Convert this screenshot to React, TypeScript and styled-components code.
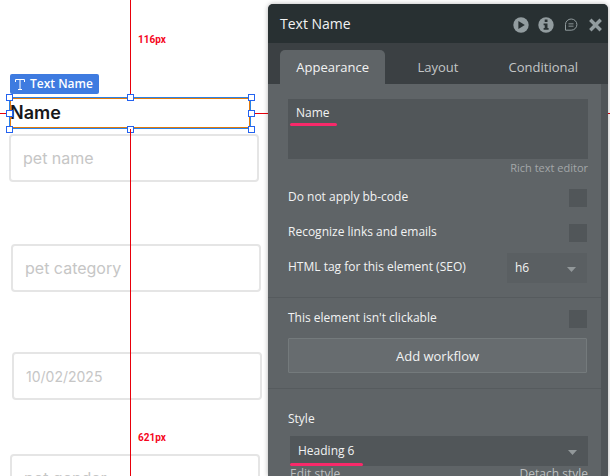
import React from "react";
import styled, { createGlobalStyle } from "styled-components";

const GlobalStyle = createGlobalStyle`
  * { box-sizing: border-box; }
  body { margin: 0; background: #fff; overflow: hidden; }
  button, input, select, textarea { font: inherit; color: inherit; margin: 0; }
`;

const Page = styled.div`
  display: flex;
  height: 100vh;
  padding-right: 2px;
  overflow: hidden;
  background: #fff;
`;

/* ---------- design canvas ---------- */

const Canvas = styled.main`
  position: relative;
  flex: 0 0 268px;
  font-family: Inter, sans-serif;
`;

const Field = styled.input<{ $x: number; $y: number; $size?: number }>`
  position: absolute;
  left: ${(p) => p.$x}px;
  top: ${(p) => p.$y}px;
  width: 250px;
  height: 48px;
  padding: 0 12px;
  border: 2px solid #e5e5e5;
  border-radius: 4px;
  background: #fff;
  font-size: ${(p) => p.$size ?? 16}px;
  outline: none;
  &::placeholder { color: #c6c6c6; opacity: 1; }
`;

const Guide = styled.div<{ $x: number; $y: number; $w?: string; $h?: string }>`
  position: absolute;
  left: ${(p) => p.$x}px;
  top: ${(p) => p.$y}px;
  width: ${(p) => p.$w ?? "1px"};
  height: ${(p) => p.$h ?? "1px"};
  background: #e8000b;
`;

const Distance = styled.span<{ $y: number }>`
  position: absolute;
  left: 138px;
  top: ${(p) => p.$y}px;
  font: 700 10px/14px Roboto, sans-serif;
  color: #f5061d;
`;

const Tag = styled.div`
  position: absolute;
  left: 10px;
  top: 74px;
  display: flex;
  align-items: center;
  gap: 5px;
  height: 20px;
  padding: 0 6px 0 5px;
  border-radius: 2px;
  background: #3e7be0;
  color: #fff;
  font: 600 12px/20px "Open Sans", sans-serif;
  white-space: nowrap;
`;

const Selection = styled.div`
  position: absolute;
  left: 9px;
  top: 97px;
  width: 242px;
  height: 32px;
  padding: 1px;
  box-shadow: inset 0 0 0 1px #2b82e6, inset 0 0 0 2px #df7a0c;
`;

const Heading = styled.h6`
  margin: 0;
  font-size: 18px;
  line-height: 30px;
  font-weight: 600;
  color: #17171a;
`;

const Handle = styled.i<{ $x: number; $y: number }>`
  position: absolute;
  left: ${(p) => p.$x}%;
  top: ${(p) => p.$y}%;
  width: 7px;
  height: 7px;
  margin: -3px;
  border: 1px solid #2463f0;
  background: #fff;
`;

const handles = [
  [0, 0], [50, 0], [100, 0],
  [0, 50], [100, 50],
  [0, 100], [50, 100], [100, 100],
];

/* ---------- property panel ---------- */

const Panel = styled.aside`
  position: relative;
  flex: 1;
  min-width: 0;
  display: flex;
  flex-direction: column;
  margin-top: 4px;
  border-radius: 5px 5px 0 0;
  background: #5f6467;
  box-shadow: 0 0 5px rgba(0, 0, 0, 0.3);
  color: #f2f3f3;
  font: 12px/18px "Open Sans", sans-serif;
`;

const Header = styled.header`
  flex: none;
  display: flex;
  align-items: center;
  height: 39px;
  padding: 0 5px 0 12px;
  border-radius: 5px 5px 0 0;
  background: #283032;
`;

const Title = styled.h1`
  flex: 1;
  margin: 0;
  font-size: 14px;
  font-weight: 400;
`;

const Tools = styled.div`
  display: flex;
  align-items: center;
  gap: 9px;
  padding-top: 2px;
`;

const IconButton = styled.button`
  display: flex;
  padding: 0;
  border: 0;
  background: none;
  color: #929c9f;
`;

const Tabs = styled.nav`
  flex: none;
  display: flex;
  height: 41px;
  padding: 7px 12px 0;
  background: #3b4043;
`;

const Tab = styled.button<{ $active?: boolean }>`
  flex: 1 1 0;
  padding: 0;
  border: 0;
  border-radius: 5px 5px 0 0;
  background: ${(p) => (p.$active ? "#5f6467" : "transparent")};
  color: ${(p) => (p.$active ? "#f2f3f3" : "#c3c6c7")};
  font-size: 13px;
`;

const Scroll = styled.div`
  flex: 1;
  min-height: 0;
  overflow: hidden;
  border-right: 7px solid #505558;
`;

const Section = styled.section<{ $top: number; $bottom?: number }>`
  padding: ${(p) => p.$top}px 13px ${(p) => p.$bottom ?? 15}px 20px;
  & + & { border-top: 1px solid #565b5e; }
`;

const TextBox = styled.textarea`
  display: block;
  width: 100%;
  height: 60px;
  padding: 5px 8px;
  border: 0;
  resize: none;
  outline: none;
  background: #515659;
`;

const Marked = styled.div`
  position: relative;
`;

const Underline = styled.i<{ $x: number; $y: number; $w: number }>`
  position: absolute;
  left: ${(p) => p.$x}px;
  top: ${(p) => p.$y}px;
  width: ${(p) => p.$w}px;
  height: 3px;
  border-radius: 2px;
  background: #f8296a;
`;

const TextLink = styled.a`
  color: inherit;
  text-decoration: none;
`;

const EditorLink = styled.div`
  text-align: right;
  font-size: 11px;
  color: #a3a7a9;
`;

const StyleLinks = styled.div`
  display: flex;
  justify-content: space-between;
  line-height: 16px;
  color: #bcbfc0;
`;

const Rows = styled.div`
  display: flex;
  flex-direction: column;
  gap: 17px;
  padding-top: 12px;
`;

const Row = styled.label`
  display: flex;
  align-items: center;
  justify-content: space-between;
  height: 18px;
  padding-right: 1px;
  white-space: nowrap;
`;

const RowText = styled.span`
  margin-top: -3px;
`;

const Check = styled.input`
  appearance: none;
  width: 18px;
  height: 18px;
  background: #515659;
  &:checked { background: #8d9597; }
`;

const SelectWrap = styled.span<{ $narrow?: boolean }>`
  position: relative;
  display: block;
  width: ${(p) => (p.$narrow ? "80px" : "auto")};
  svg {
    position: absolute;
    right: 11px;
    top: 14px;
    pointer-events: none;
  }
`;

const Select = styled.select<{ $soft?: boolean }>`
  appearance: none;
  display: block;
  width: 100%;
  height: 30px;
  padding: 0 8px;
  border: 0;
  border-radius: 0;
  outline: none;
  background: ${(p) => (p.$soft ? "#5a5f62" : "#515659")};
`;

const WorkflowButton = styled.button`
  display: block;
  width: calc(100% - 1px);
  height: 35px;
  margin-top: 10px;
  padding: 0;
  border: 1px solid #747a7c;
  border-radius: 1px;
  background: #676c6f;
  font-size: 13px;
`;

const StyleLabel = styled.label`
  display: block;
  margin-bottom: 8px;
`;

const StyleBlock = styled.div`
  padding-left: 2px;
`;

const Caret = () => (
  <svg width="9" height="5" viewBox="0 0 9 5" aria-hidden="true">
    <path d="M0 0h9L4.5 5z" fill="#92989a" />
  </svg>
);

export default function App() {
  return (
    <>
      <GlobalStyle />
      <Page>
        <Canvas>
          <Field $x={9} $y={134} placeholder="pet name" aria-label="pet name" />
          <Field $x={11} $y={244} placeholder="pet category" aria-label="pet category" />
          <Field $x={12} $y={352} $size={14} placeholder="10/02/2025" aria-label="date" />
          <Field $x={10} $y={454} placeholder="pet gender" aria-label="pet gender" />
          <Guide $x={130} $y={0} $h="97px" />
          <Guide $x={0} $y={113} $w="9px" />
          <Guide $x={251} $y={113} $w="100vw" />
          <Distance $y={33}>116px</Distance>
          <Distance $y={431}>621px</Distance>
          <Tag>
            <svg width="10" height="11" viewBox="0 0 10 11" fill="none" stroke="#fff" aria-hidden="true">
              <path d="M.5 3V.5h9V3M5 .5v10M3 10.5h4" />
            </svg>
            Text Name
          </Tag>
          <Selection>
            <Heading>Name</Heading>
            {handles.map(([x, y]) => (
              <Handle key={`${x}-${y}`} $x={x} $y={y} />
            ))}
          </Selection>
          <Guide $x={130} $y={129} $h="100vh" />
        </Canvas>

        <Panel>
          <Header>
            <Title>Text Name</Title>
            <Tools>
              <IconButton aria-label="Preview">
                <svg width="16" height="16" viewBox="0 0 16 16">
                  <circle cx="8" cy="8" r="7.7" fill="currentColor" />
                  <path d="M5.4 4v8l6.4-4z" fill="#283032" />
                </svg>
              </IconButton>
              <IconButton aria-label="Information">
                <svg width="16" height="16" viewBox="0 0 16 16">
                  <circle cx="8" cy="8" r="7.7" fill="currentColor" />
                  <path d="M6.7 2.6h2.8v2.5H6.7zM5.6 6.4h3.9v4.5h1.1v1.9H5.6v-1.9h1.1V8.2H5.6z" fill="#283032" />
                </svg>
              </IconButton>
              <IconButton aria-label="Comments">
                <svg width="16" height="16" viewBox="0 0 16 16" fill="none" stroke="currentColor">
                  <path d="M2.5 13.2V7.6a5.7 5.6 0 1 1 5.7 5.6z" />
                  <path d="M5.5 6.5h5M5.5 8h5M5.5 9.5h5" opacity=".6" />
                </svg>
              </IconButton>
              <IconButton aria-label="Close">
                <svg width="15" height="15" viewBox="0 0 15 15" fill="none" stroke="currentColor">
                  <path d="M3.5 4l8 8M11.5 4l-8 8" strokeLinecap="square" strokeWidth="3.4" />
                </svg>
              </IconButton>
            </Tools>
          </Header>
          <Tabs>
            <Tab $active>Appearance</Tab>
            <Tab>Layout</Tab>
            <Tab>Conditional</Tab>
          </Tabs>
          <Scroll>
            <Section $top={15} $bottom={20}>
              <Marked>
                <TextBox aria-label="Text content" defaultValue="Name" spellCheck={false} />
                <Underline $x={2} $y={24} $w={47} />
              </Marked>
              <EditorLink>
                <TextLink href="#rich-text">Rich text editor</TextLink>
              </EditorLink>
              <Rows>
                <Row>
                  <RowText>Do not apply bb-code</RowText>
                  <Check type="checkbox" />
                </Row>
                <Row>
                  <RowText>Recognize links and emails</RowText>
                  <Check type="checkbox" />
                </Row>
                <Row>
                  <RowText>HTML tag for this element (SEO)</RowText>
                  <SelectWrap $narrow>
                    <Select $soft defaultValue="h6">
                      <option>h6</option>
                    </Select>
                    <Caret />
                  </SelectWrap>
                </Row>
              </Rows>
            </Section>
            <Section $top={12}>
              <Row>
                <RowText>This element isn't clickable</RowText>
                <Check type="checkbox" />
              </Row>
              <WorkflowButton>Add workflow</WorkflowButton>
            </Section>
            <Section $top={21}>
              <StyleLabel htmlFor="style">Style</StyleLabel>
              <StyleBlock>
                <Marked>
                  <SelectWrap>
                    <Select id="style" defaultValue="Heading 6">
                      <option>Heading 6</option>
                    </Select>
                    <Caret />
                  </SelectWrap>
                  <Underline $x={0} $y={27} $w={73} />
                </Marked>
                <StyleLinks>
                  <TextLink href="#edit">Edit style</TextLink>
                  <TextLink href="#detach">Detach style</TextLink>
                </StyleLinks>
              </StyleBlock>
            </Section>
          </Scroll>
        </Panel>
      </Page>
    </>
  );
}
